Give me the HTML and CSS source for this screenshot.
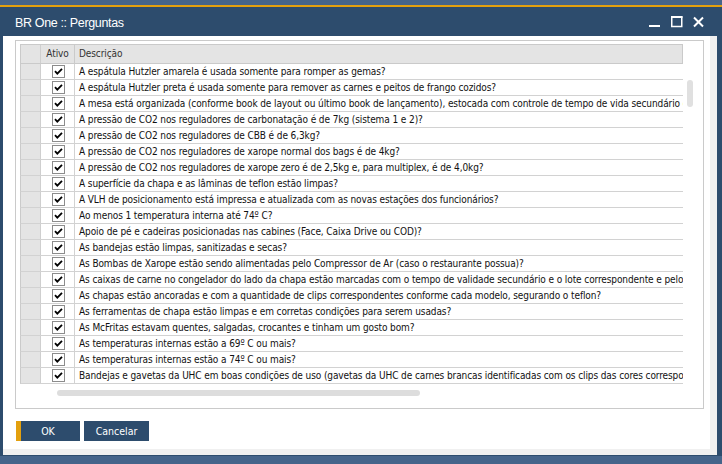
FILE: index.html
```html
<!DOCTYPE html>
<html lang="pt">
<head>
<meta charset="utf-8">
<title>BR One :: Perguntas</title>
<link rel="stylesheet" href="styles.css">
</head>
<body>
<div class="window">
  <div class="titlebar">
    <span class="title">BR One :: Perguntas</span>
    <div class="controls">
      <svg class="ctl" width="12" height="12" viewBox="0 0 12 12"><rect x="0" y="9" width="11" height="2" fill="#fff"/></svg>
      <svg class="ctl" width="12" height="12" viewBox="0 0 12 12"><rect x="0.75" y="1" width="10" height="9.5" fill="none" stroke="#fff" stroke-width="1.5"/><rect x="0" y="0" width="11.5" height="2" fill="#fff"/></svg>
      <svg class="ctl" width="12" height="12" viewBox="0 0 12 12"><path d="M1 1.5 L10 10.5 M10 1.5 L1 10.5" stroke="#fff" stroke-width="2" fill="none"/></svg>
    </div>
  </div>
  <div class="client">
    <div class="gridbox">
      <div class="gridtop">
        <div class="table">
          <div class="row header">
            <div class="sel"></div>
            <div class="chk">Ativo</div>
            <div class="desc">Descrição</div>
          </div>
          <div class="row"><div class="sel"></div><div class="chk"><span class="cb"></span></div><div class="desc">A espátula Hutzler amarela é usada somente para romper as gemas?</div></div>
          <div class="row"><div class="sel"></div><div class="chk"><span class="cb"></span></div><div class="desc">A espátula Hutzler preta é usada somente para remover as carnes e peitos de frango cozidos?</div></div>
          <div class="row"><div class="sel"></div><div class="chk"><span class="cb"></span></div><div class="desc">A mesa está organizada (conforme book de layout ou último book de lançamento), estocada com controle de tempo de vida secundário e etiquetas?</div></div>
          <div class="row"><div class="sel"></div><div class="chk"><span class="cb"></span></div><div class="desc">A pressão de CO2 nos reguladores de carbonatação é de 7kg (sistema 1 e 2)?</div></div>
          <div class="row"><div class="sel"></div><div class="chk"><span class="cb"></span></div><div class="desc">A pressão de CO2 nos reguladores de CBB é de 6,3kg?</div></div>
          <div class="row"><div class="sel"></div><div class="chk"><span class="cb"></span></div><div class="desc">A pressão de CO2 nos reguladores de xarope normal dos bags é de 4kg?</div></div>
          <div class="row"><div class="sel"></div><div class="chk"><span class="cb"></span></div><div class="desc">A pressão de CO2 nos reguladores de xarope zero é de 2,5kg e, para multiplex, é de 4,0kg?</div></div>
          <div class="row"><div class="sel"></div><div class="chk"><span class="cb"></span></div><div class="desc">A superfície da chapa e as lâminas de teflon estão limpas?</div></div>
          <div class="row"><div class="sel"></div><div class="chk"><span class="cb"></span></div><div class="desc">A VLH de posicionamento está impressa e atualizada com as novas estações dos funcionários?</div></div>
          <div class="row"><div class="sel"></div><div class="chk"><span class="cb"></span></div><div class="desc">Ao menos 1 temperatura interna até 74º C?</div></div>
          <div class="row"><div class="sel"></div><div class="chk"><span class="cb"></span></div><div class="desc">Apoio de pé e cadeiras posicionadas nas cabines (Face, Caixa Drive ou COD)?</div></div>
          <div class="row"><div class="sel"></div><div class="chk"><span class="cb"></span></div><div class="desc">As bandejas estão limpas, sanitizadas e secas?</div></div>
          <div class="row"><div class="sel"></div><div class="chk"><span class="cb"></span></div><div class="desc">As Bombas de Xarope estão sendo alimentadas pelo Compressor de Ar (caso o restaurante possua)?</div></div>
          <div class="row"><div class="sel"></div><div class="chk"><span class="cb"></span></div><div class="desc">As caixas de carne no congelador do lado da chapa estão marcadas com o tempo de validade secundário e o lote correspondente e pelo responsável?</div></div>
          <div class="row"><div class="sel"></div><div class="chk"><span class="cb"></span></div><div class="desc">As chapas estão ancoradas e com a quantidade de clips correspondentes conforme cada modelo, segurando o teflon?</div></div>
          <div class="row"><div class="sel"></div><div class="chk"><span class="cb"></span></div><div class="desc">As ferramentas de chapa estão limpas e em corretas condições para serem usadas?</div></div>
          <div class="row"><div class="sel"></div><div class="chk"><span class="cb"></span></div><div class="desc">As McFritas estavam quentes, salgadas, crocantes e tinham um gosto bom?</div></div>
          <div class="row"><div class="sel"></div><div class="chk"><span class="cb"></span></div><div class="desc">As temperaturas internas estão a 69º C ou mais?</div></div>
          <div class="row"><div class="sel"></div><div class="chk"><span class="cb"></span></div><div class="desc">As temperaturas internas estão a 74º C ou mais?</div></div>
          <div class="row"><div class="sel"></div><div class="chk"><span class="cb"></span></div><div class="desc">Bandejas e gavetas da UHC em boas condições de uso (gavetas da UHC de carnes brancas identificadas com os clips das cores correspondentes)?</div></div>
        </div>
        <div class="vscroll"><div class="vthumb"></div></div>
      </div>
      <div class="hscroll"><div class="hthumb"></div></div>
    </div>
    <div class="buttons">
      <div class="btn ok">OK</div>
      <div class="btn cancel">Cancelar</div>
    </div>
  </div>
</div>
</body>
</html>
```

FILE: styles.css
```css
* { box-sizing: border-box; }

body {
  margin: 0;
  width: 722px;
  height: 464px;
  overflow: hidden;
  background: #45648a;
  font-family: "DejaVu Sans Condensed", "DejaVu Sans", sans-serif;
}

.window {
  margin-top: 5px;
  width: 722px;
  height: 451px;
  border-top: 2px solid #e3a00e;
  background: #2d4c6d;
  padding: 0 5px 1px 3px;
}

.titlebar {
  height: 29px;
  display: flex;
  align-items: center;
  justify-content: space-between;
  padding: 0 12px 0 12px;
}

.title {
  color: #fff;
  font-family: "Liberation Sans", sans-serif;
  font-size: 12.5px;
  letter-spacing: -0.35px;
  margin-top: 2px;
}

.controls {
  display: flex;
  align-items: center;
  gap: 10px;
  margin-top: 1px;
}

.ctl { display: block; }

.client {
  height: 419px;
  background: #fff;
  border-right: 7px solid #f0f0f0;
  border-bottom: 6px solid #f0f0f0;
  display: flex;
  flex-direction: column;
}

.gridbox {
  margin: 4px 0 0 12px;
  width: 689px;
  height: 369px;
  border: 1px solid #cacaca;
  padding: 3px 0 0 4px;
}

.gridtop {
  display: flex;
}

.table {
  width: 663px;
}

.row {
  display: grid;
  grid-template-columns: 20px 34px 1fr;
  height: 16px;
  border-left: 1px solid #cacaca;
  border-bottom: 1px solid #d2d2d2;
  font-size: 10px;
  letter-spacing: -0.1px;
  line-height: 15px;
  color: #111;
}

.row.header {
  height: 20px;
  border-top: 1px solid #cacaca;
  border-right: 1px solid #cacaca;
  border-bottom: 1px solid #cacaca;
  background: #e4e4e4;
  line-height: 18px;
  color: #333;
}

.sel {
  background: #e4e4e4;
  border-right: 1px solid #cfcfcf;
}

.chk {
  border-right: 1px solid #d2d2d2;
  display: flex;
  align-items: center;
  justify-content: center;
}

.header .chk { border-right-color: #cacaca; }

.desc {
  padding-left: 4px;
  white-space: nowrap;
  overflow: hidden;
}

.cb {
  display: block;
  width: 13px;
  height: 13px;
  border: 1px solid #8c8c8c;
  background: #fff url("data:image/svg+xml;utf8,<svg xmlns='http://www.w3.org/2000/svg' width='11' height='11' viewBox='0 0 11 11'><path d='M2 5.2 L4.3 7.6 L9 2.8' stroke='black' stroke-width='1.8' fill='none'/></svg>") no-repeat center;
  margin-left: 1px;
}

.vscroll {
  margin-left: 4px;
  padding-top: 36px;
}

.vthumb {
  width: 6px;
  height: 27px;
  border-radius: 3px;
  background: #e0e0e0;
}

.hscroll {
  margin: 6px 0 0 37px;
}

.hthumb {
  width: 363px;
  height: 6px;
  border-radius: 3px;
  background: #dddddd;
}

.buttons {
  display: flex;
  gap: 4px;
  margin: 12px 0 0 13px;
}

.btn {
  height: 20px;
  background: #2d4c6d;
  color: #fff;
  font-size: 10.5px;
  line-height: 20px;
  text-align: center;
}

.ok {
  width: 64px;
  box-shadow: inset 5px 0 0 #e3a00e;
}

.cancel {
  width: 65px;
}
```
